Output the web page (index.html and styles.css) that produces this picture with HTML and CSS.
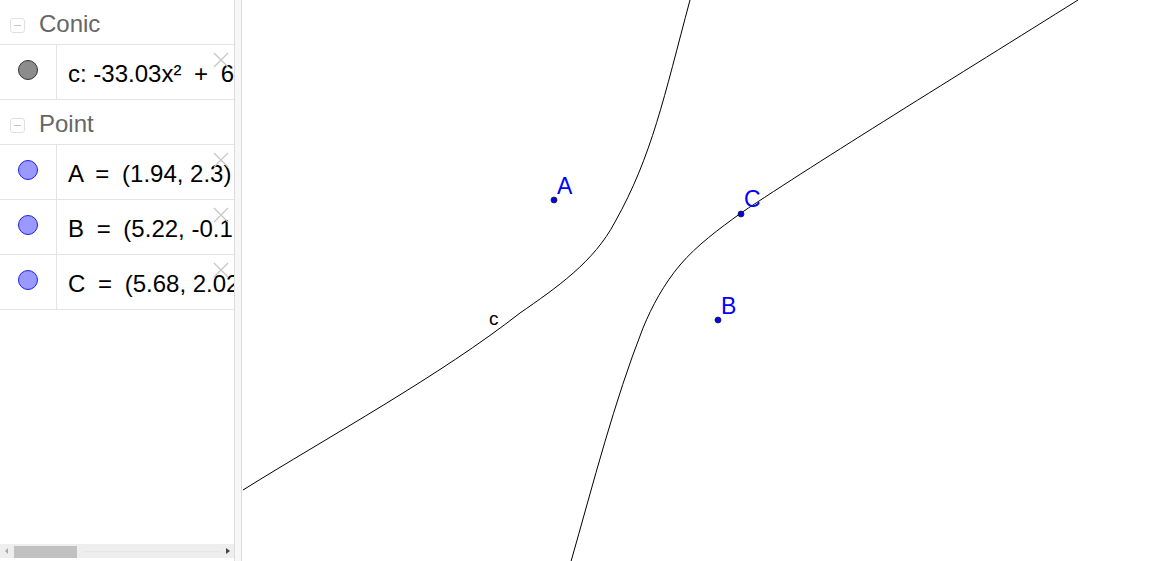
FILE: index.html
```html
<!DOCTYPE html>
<html>
<head>
<meta charset="utf-8">
<link rel="stylesheet" href="styles.css">
</head>
<body>
<div class="app">
  <aside class="algebra">
    <div class="list">
      <div class="group-head">
        <span class="toggle"><span class="minus"></span></span>
        <span class="group-title">Conic</span>
      </div>
      <div class="item">
        <div class="marker"><span class="dot dot-conic"></span></div>
        <div class="formula">c: -33.03x² <span class="op">+</span> 6</div>
        <svg class="close" viewBox="0 0 16 16"><path d="M1 1L15 15M15 1L1 15"/></svg>
      </div>
      <div class="group-head">
        <span class="toggle"><span class="minus"></span></span>
        <span class="group-title">Point</span>
      </div>
      <div class="item">
        <div class="marker"><span class="dot dot-point"></span></div>
        <div class="formula">A <span class="op">=</span> (1.94, 2.3)</div>
        <svg class="close" viewBox="0 0 16 16"><path d="M1 1L15 15M15 1L1 15"/></svg>
      </div>
      <div class="item">
        <div class="marker"><span class="dot dot-point"></span></div>
        <div class="formula">B <span class="op">=</span> (5.22, -0.1</div>
        <svg class="close" viewBox="0 0 16 16"><path d="M1 1L15 15M15 1L1 15"/></svg>
      </div>
      <div class="item">
        <div class="marker"><span class="dot dot-point"></span></div>
        <div class="formula">C <span class="op">=</span> (5.68, 2.02</div>
        <svg class="close" viewBox="0 0 16 16"><path d="M1 1L15 15M15 1L1 15"/></svg>
      </div>
    </div>
    <div class="hscroll">
      <span class="arrow-left"></span>
      <span class="thumb"></span>
      <span class="track"></span>
      <span class="arrow-right"></span>
    </div>
  </aside>
  <div class="splitter"></div>
  <main class="graphics">
    <svg class="plot" viewBox="242 0 931 561" preserveAspectRatio="xMinYMin meet">
      <path class="curve" d="M690,0 C664,97 652,156 615,222 C594,262 556,288 520,313 C441,375 328,437 243,490"/>
      <path class="curve" d="M1078,0 C960,74 820,160 741,213 C719,229 697,245 680,265 C664,284 652,306 643,328 C614,402 594,481 570,565"/>
      <text class="curve-label" x="489" y="325">c</text>
      <circle class="pt" cx="554" cy="200" r="3"/>
      <circle class="pt" cx="718" cy="320" r="3"/>
      <circle class="pt" cx="741" cy="214" r="3"/>
      <text class="pt-label" x="557" y="194">A</text>
      <text class="pt-label" x="721" y="314">B</text>
      <text class="pt-label" x="744" y="207">C</text>
    </svg>
  </main>
</div>
</body>
</html>
```

FILE: styles.css
```css
* { box-sizing: border-box; }
html, body { margin: 0; padding: 0; background: #fff; }
body { font-family: "Liberation Sans", Arial, sans-serif; width: 1173px; height: 561px; overflow: hidden; }

.app { display: flex; width: 1173px; height: 561px; }

.algebra {
  width: 235px;
  height: 561px;
  border-right: 1px solid #dcdcdc;
  display: flex;
  flex-direction: column;
  padding-bottom: 3px;
}
.list { flex: 1; overflow: hidden; }

.group-head {
  height: 45px;
  border-bottom: 1px solid #e4e4e4;
  display: flex;
  align-items: flex-start;
  padding: 10px 0 0 10px;
}
.toggle {
  width: 15px; height: 15px;
  margin-top: 8px;
  border: 1px solid #e0e0e0;
  border-radius: 3px;
  display: flex; align-items: center; justify-content: center;
}
.minus { width: 7px; height: 1px; background: #c4c4c4; }
.group-title {
  margin-left: 14px;
  font-size: 24px;
  line-height: 28px;
  color: #666;
}

.item {
  position: relative;
  height: 55px;
  border-bottom: 1px solid #e4e4e4;
  display: flex;
}
.marker {
  width: 57px;
  border-right: 1px solid #e4e4e4;
  display: flex;
  justify-content: center;
  padding-top: 15px;
  padding-right: 1px;
}
.dot {
  width: 20px; height: 20px;
  border-radius: 50%;
}
.dot-conic { background: #8c8c8c; border: 1px solid #333; }
.dot-point { background: #9999ff; border: 1px solid #2020e0; }

.formula {
  flex: 1;
  overflow: hidden;
  white-space: nowrap;
  padding: 15px 0 0 11px;
  font-size: 24px;
  line-height: 28px;
  color: #000;
}
.op { padding: 0 6px; }

.close {
  position: absolute;
  top: 7px; right: 5px;
  width: 16px; height: 16px;
}
.close path { stroke: #c8c8c8; stroke-width: 1.4; fill: none; }

.hscroll {
  position: relative;
  height: 14px;
  background: #eeeeee;
  display: flex;
  align-items: center;
}
.arrow-left {
  width: 0; height: 0;
  margin-left: 5px;
  border-top: 3.5px solid transparent;
  border-bottom: 3.5px solid transparent;
  border-right: 3.5px solid #a8a8a8;
}
.thumb {
  align-self: flex-end;
  margin-left: 6px;
  width: 63px; height: 12px;
  background: #c1c1c1;
}
.track {
  flex: 1;
  margin: 0 6px;
  border-top: 1px dotted #e0e0e0;
}
.arrow-right {
  width: 0; height: 0;
  margin-right: 4px;
  border-top: 3.5px solid transparent;
  border-bottom: 3.5px solid transparent;
  border-left: 4px solid #444;
}

.splitter {
  width: 7px;
  height: 561px;
  background: #f7f7f7;
  border-right: 1px solid #dcdcdc;
}

.graphics { flex: 1; height: 561px; overflow: hidden; }
.plot { display: block; width: 931px; height: 561px; }
.curve { fill: none; stroke: #000; stroke-width: 1; }
.pt { fill: #0000ee; stroke: #222; stroke-width: 0.8; }
.pt-label { font-family: "Liberation Sans", Arial, sans-serif; font-size: 23px; fill: #0000ff; }
.curve-label { font-family: "Liberation Sans", Arial, sans-serif; font-size: 19px; fill: #000; }
```
